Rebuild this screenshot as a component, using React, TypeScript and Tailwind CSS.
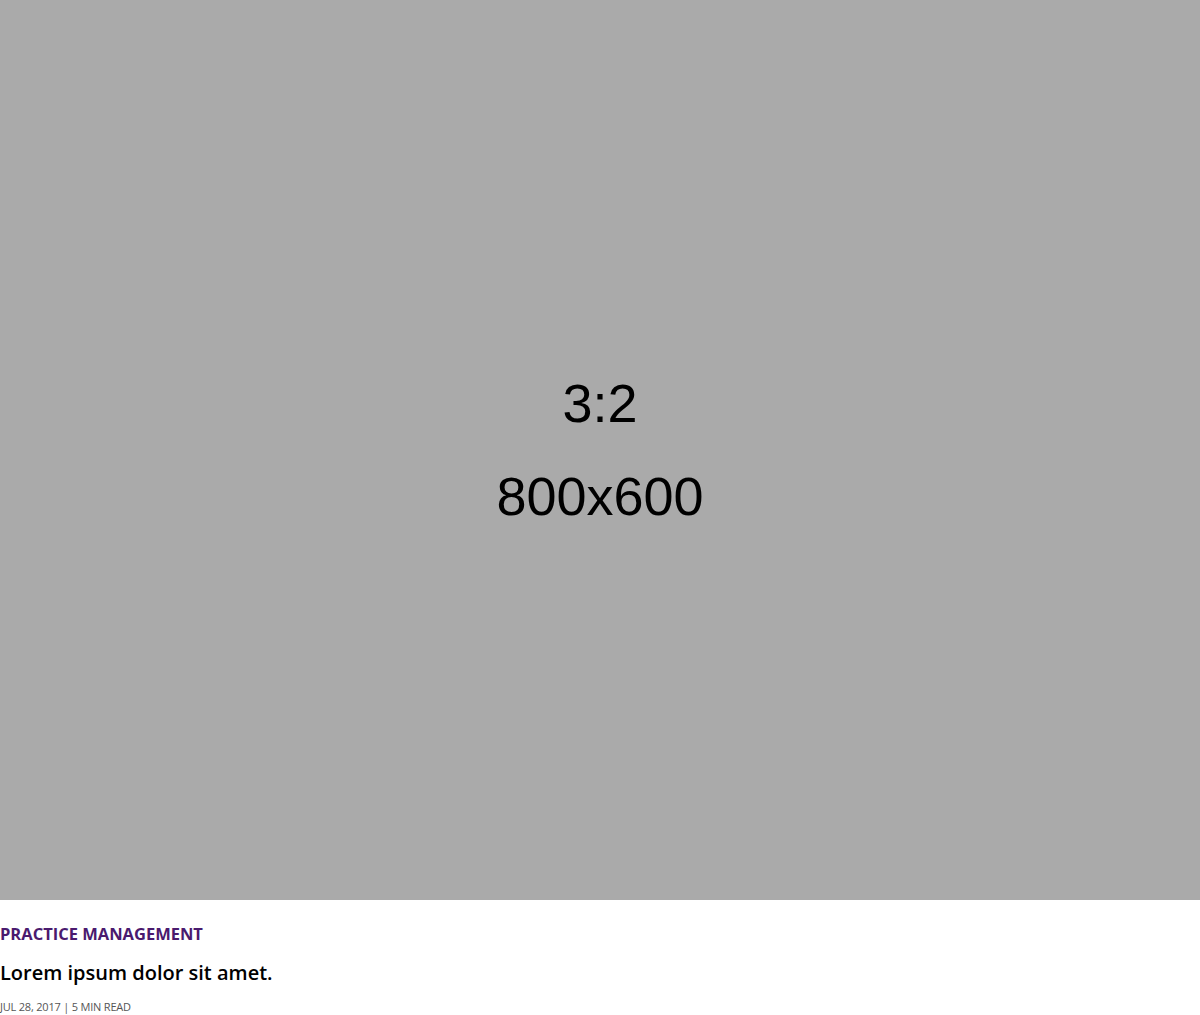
export default function App() {
  return (
    <div className="w-[1200px] bg-white">
      {/* Placeholder image */}
      <div className="flex h-[900px] w-full flex-col items-center justify-center bg-[#aaaaaa] font-['Liberation_Sans',Arial,sans-serif] text-[54px] leading-[93px] text-black">
        <div>3:2</div>
        <div>800x600</div>
      </div>

      <div className="font-['Open_Sans','Noto_Sans',sans-serif]">
        <div className="mt-[22px] text-[16.5px] font-bold uppercase leading-[24px] text-[#4a1a6e]">
          Practice Management
        </div>
        <h2 className="mt-[13px] text-[20px] font-semibold leading-[28px] text-black">
          Lorem ipsum dolor sit amet.
        </h2>
        <div className="mt-[13px] text-[11px] uppercase leading-[14px] tracking-[-0.2px] text-[#555555]">
          Jul 28, 2017 | 5 min read
        </div>
      </div>
    </div>
  );
}
